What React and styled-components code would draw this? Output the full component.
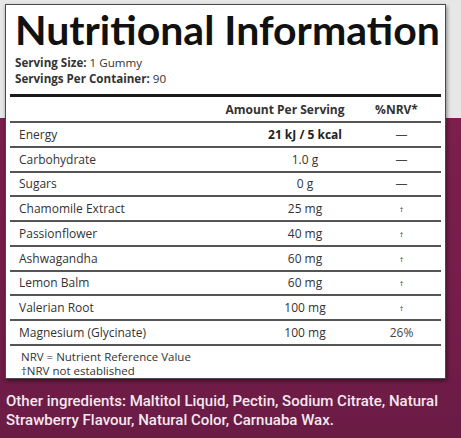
import styled, { createGlobalStyle } from 'styled-components'

const Global = createGlobalStyle`
  html, body {
    margin: 0;
    padding: 0;
  }
  body {
    width: 461px;
    height: 438px;
    overflow: hidden;
  }
`

const rows = [
  { name: 'Energy', amount: '21 kJ / 5 kcal', nrv: '—', bold: true },
  { name: 'Carbohydrate', amount: '1.0 g', nrv: '—' },
  { name: 'Sugars', amount: '0 g', nrv: '—' },
  { name: 'Chamomile Extract', amount: '25 mg', nrv: '†' },
  { name: 'Passionflower', amount: '40 mg', nrv: '†' },
  { name: 'Ashwagandha', amount: '60 mg', nrv: '†' },
  { name: 'Lemon Balm', amount: '60 mg', nrv: '†' },
  { name: 'Valerian Root', amount: '100 mg', nrv: '†' },
  { name: 'Magnesium (Glycinate)', amount: '100 mg', nrv: '26%' },
]

function App() {
  return (
    <Page>
      <Global />
      <Panel>
        <Title>Nutritional Information</Title>
        <Serving>
          <div><b>Serving Size:</b> 1 Gummy</div>
          <div><b>Servings Per Container:</b> 90</div>
        </Serving>
        <HeadRow>
          <span />
          <HeadCell>Amount Per Serving</HeadCell>
          <HeadCell $nrv>%NRV*</HeadCell>
        </HeadRow>
        {rows.map((r) => (
          <Row key={r.name}>
            <Name>{r.name}</Name>
            <Amount $bold={r.bold}>{r.amount}</Amount>
            <Nrv $small={r.nrv === '†'}>{r.nrv}</Nrv>
          </Row>
        ))}
        <Notes>
          <div>NRV = Nutrient Reference Value</div>
          <div>†NRV not established</div>
        </Notes>
      </Panel>
      <Other>
        Other ingredients: Maltitol Liquid, Pectin, Sodium Citrate, Natural Strawberry Flavour, Natural Color, Carnuaba Wax.
      </Other>
    </Page>
  )
}

const Page = styled.div`
  width: 461px;
  height: 438px;
  box-sizing: border-box;
  padding-top: 4px;
  background: linear-gradient(
    to bottom,
    #e8e7e8 0,
    #e8e7e8 118px,
    #7c1f4d 118px,
    #751d4a 300px,
    #6a1c45 438px
  );
  font-family: 'Open Sans', 'Noto Sans', sans-serif;
  color: #333;
`

const Panel = styled.div`
  margin: 0 15px 0 5px;
  background: #fff;
  border: 1px solid #4a4a4a;
  box-shadow: 1px 2px 4px rgba(0, 0, 0, 0.45);
  padding: 0 4px;
`

const Title = styled.h1`
  margin: 0;
  padding: 3px 0 0 5px;
  font-family: 'Lato', sans-serif;
  font-weight: 700;
  font-size: 41px;
  line-height: 44px;
  white-space: nowrap;
  color: #111;
`

const Serving = styled.div`
  padding: 3px 0 7px 5px;
  font-size: 11.6px;
  line-height: 16px;
  color: #333;
  border-bottom: 3px solid #1a1a1a;
  b {
    font-weight: 700;
  }
`

const HeadRow = styled.div`
  display: grid;
  grid-template-columns: 200px 150px 1fr;
  height: 24px;
  align-items: center;
  border-bottom: 2px solid #555;
`

const HeadCell = styled.span`
  font-size: 12px;
  font-weight: 700;
  text-align: center;
  color: #333;
  ${(p) => p.$nrv && 'padding-right: 8px;'}
`

const Row = styled.div`
  display: grid;
  grid-template-columns: 230px 130px 1fr;
  height: 22.75px;
  align-items: center;
  border-bottom: 2px solid #555;
  font-size: 12px;
`

const Name = styled.span`
  padding-left: 9px;
  color: #333;
`

const Amount = styled.span`
  text-align: center;
  font-weight: ${(p) => (p.$bold ? 700 : 400)};
  color: ${(p) => (p.$bold ? '#222' : '#333')};
`

const Nrv = styled.span`
  text-align: center;
  padding-right: 8px;
  font-size: ${(p) => (p.$small ? '8px' : '12px')};
  color: #444;
`

const Notes = styled.div`
  height: 32px;
  padding: 4px 0 0 11px;
  box-sizing: border-box;
  font-size: 11.5px;
  line-height: 14px;
  color: #333;
`

const Other = styled.p`
  margin: 13px 8px 0 6px;
  font-family: 'Roboto', 'Liberation Sans', sans-serif;
  font-weight: 500;
  font-size: 15px;
  line-height: 19px;
  color: #f4e8ee;
`

export default App
